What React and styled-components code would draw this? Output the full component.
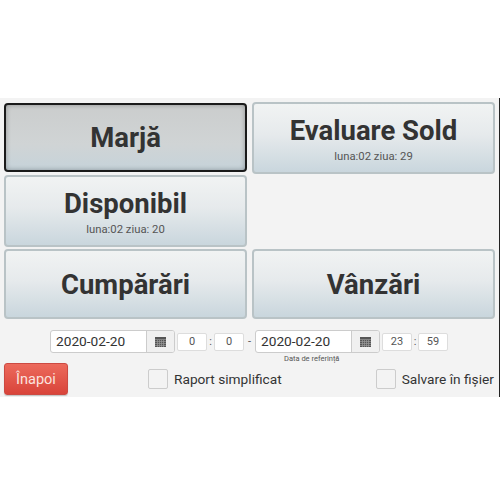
import React from 'react'
import styled, { createGlobalStyle } from 'styled-components'

const Global = createGlobalStyle`
  html, body { margin: 0; background: #fff; }
  body { font-family: Roboto, "Liberation Sans", sans-serif; }
`

const Page = styled.div`
  padding-top: 98px;
  width: 500px;
`

const Panel = styled.div`
  background: #f3f3f3;
  height: 299px;
  box-sizing: border-box;
  padding: 4px 5px 0 4px;
  border-right: 1px solid #222;
`

const Grid = styled.div`
  display: grid;
  grid-template-columns: 243px 243px;
  grid-template-rows: 72px 72px 71px;
  column-gap: 5px;
  row-gap: 1px;
`

const Tile = styled.button`
  box-sizing: border-box;
  margin: ${p => p.$margin || 0};
  padding: 0;
  display: flex;
  flex-direction: column;
  align-items: center;
  justify-content: center;
  border-radius: 4px;
  font-family: inherit;
  color: #333;
  border: ${p => (p.$active ? '2px solid #1a1a1a' : '2px solid #b9c3c6')};
  background: ${p => (p.$active
    ? 'linear-gradient(#cbcdcd, #d0d4d5 60%, #c6d3da)'
    : 'linear-gradient(#f1f3f3, #e6eaec 45%, #c9d6dd)')};
  box-shadow: ${p => (p.$active ? 'inset 0 0 5px rgba(0,0,0,.3)' : 'none')};
`

const TileTitle = styled.span`
  font-size: 27.5px;
  font-weight: 700;
  line-height: 33px;
`

const TileNote = styled.span`
  font-size: 11.3px;
  line-height: 13px;
  margin-top: 3px;
  color: #555;
`

const DateRow = styled.div`
  display: flex;
  align-items: flex-start;
  margin-top: 11px;
  height: 32px;
  padding-left: 46px;
`

const DateBlock = styled.div`
  display: flex;
  flex-direction: column;
`

const DateGroup = styled.div`
  display: flex;
  flex: none;
  width: 125px;
  height: 23px;
  box-sizing: border-box;
  border: 1px solid #ccc;
  border-radius: 3px;
  background: #fff;
`

const DateValue = styled.div`
  flex: 1;
  font-size: 13.7px;
  line-height: 21px;
  padding-left: 5px;
  box-sizing: border-box;
  color: #333;
`

const CalendarAddon = styled.div`
  width: 27px;
  display: flex;
  align-items: center;
  justify-content: center;
  background: #f0f0f0;
  border-left: 1px solid #ccc;
  border-radius: 0 2px 2px 0;
`

const TimeBox = styled.div`
  flex: none;
  width: 30px;
  height: 18px;
  margin: 3px 0 0 ${p => p.$left || 0}px;
  box-sizing: border-box;
  border: 1px solid #ddd;
  border-radius: 2px;
  background: #fff;
  font-size: 11px;
  line-height: 16px;
  text-align: center;
  color: #555;
`

const TimeSep = styled.span`
  flex: none;
  width: ${p => p.$w || 7}px;
  margin-top: 3px;
  text-align: center;
  font-size: 11px;
  line-height: 18px;
  color: #555;
`

const DateCaption = styled.div`
  font-size: 7.5px;
  line-height: 9px;
  margin: 1px 0 0 29px;
  color: #555;
  white-space: nowrap;
`

const BottomRow = styled.div`
  display: flex;
  align-items: center;
  margin-top: 1px;
  height: 32px;
`

const BackButton = styled.button`
  flex: none;
  box-sizing: border-box;
  width: 64px;
  height: 32px;
  margin: 0 80px 0 0;
  padding: 0;
  border: 1px solid #cc4a42;
  border-radius: 3px;
  background: linear-gradient(#ec6a5c, #d9443a);
  box-shadow: 0 1px 1px rgba(0,0,0,.2);
  color: #fbe3df;
  font-family: inherit;
  font-size: 14.5px;
`

const CheckLabel = styled.label`
  flex: none;
  display: flex;
  align-items: center;
  font-size: 13.7px;
  color: #333;
  white-space: nowrap;
  margin-right: ${p => p.$gap || 0}px;
`

const CheckSquare = styled.span`
  width: 20px;
  height: 20px;
  box-sizing: border-box;
  border: 1px solid #ccc;
  border-radius: 2px;
  margin-right: 6px;
`

const CalendarIcon = () => (
  <svg width="11" height="10" viewBox="0 0 11 10">
    <rect width="11" height="10" fill="#555" />
    <path d="M0 2.500H11M0 4.500H11M0 6.500H11M0 8.500H11M2.500 3V10M4.500 3V10M6.500 3V10M8.500 3V10" stroke="#9a9a9a" strokeWidth=".7" />
  </svg>
)

const DatePicker = ({ value }) => (
  <DateGroup>
    <DateValue>{value}</DateValue>
    <CalendarAddon><CalendarIcon /></CalendarAddon>
  </DateGroup>
)

export default function App() {
  return (
    <Page>
      <Global />
      <Panel>
        <Grid>
          <Tile $active $margin="1px 0 2px"><TileTitle>Marjă</TileTitle></Tile>
          <Tile><TileTitle>Evaluare Sold</TileTitle><TileNote>luna:02 ziua: 29</TileNote></Tile>
          <Tile><TileTitle>Disponibil</TileTitle><TileNote>luna:02 ziua: 20</TileNote></Tile>
          <span />
          <Tile $margin="1px 0 0"><TileTitle>Cumpărări</TileTitle></Tile>
          <Tile $margin="1px 0 0"><TileTitle>Vânzări</TileTitle></Tile>
        </Grid>
        <DateRow>
          <DatePicker value="2020-02-20" />
          <TimeBox $left={2}>0</TimeBox>
          <TimeSep>:</TimeSep>
          <TimeBox>0</TimeBox>
          <TimeSep $w={11}>-</TimeSep>
          <DateBlock>
            <DatePicker value="2020-02-20" />
            <DateCaption>Data de referință</DateCaption>
          </DateBlock>
          <TimeBox $left={2}>23</TimeBox>
          <TimeSep $w={6}>:</TimeSep>
          <TimeBox>59</TimeBox>
        </DateRow>
        <BottomRow>
          <BackButton>Înapoi</BackButton>
          <CheckLabel $gap={94}><CheckSquare />Raport simplificat</CheckLabel>
          <CheckLabel><CheckSquare />Salvare în fișier</CheckLabel>
        </BottomRow>
      </Panel>
    </Page>
  )
}
